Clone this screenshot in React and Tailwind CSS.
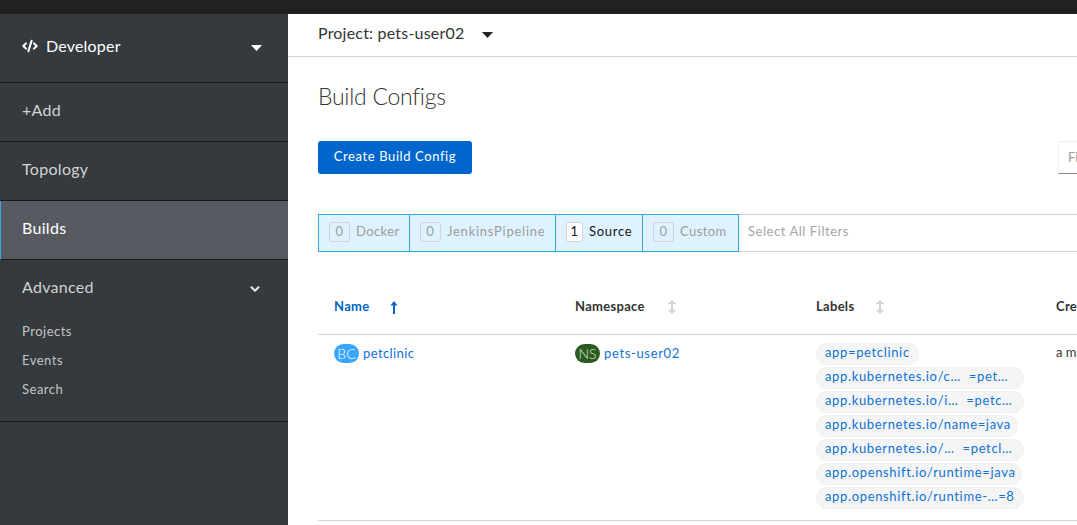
import { ChevronDown, CodeXml } from "lucide-react";

const font = "font-['Lato','Open_Sans',sans-serif]";

// 정렬 아이콘 (위아래 화살표)
function SortIcon({ active }) {
  if (active) {
    return (
      <svg width="8" height="13" viewBox="0 0 8 13" className="text-[#0066cc]">
        <path d="M4 0 L7.5 4.5 H5 V13 H3 V4.5 H0.5 Z" fill="currentColor" />
      </svg>
    );
  }
  return (
    <svg width="8" height="14" viewBox="0 0 8 14" className="text-[#d2d2d2]">
      <path d="M4 0 L8 4 H5 V10 H8 L4 14 L0 10 H3 V4 H0 Z" fill="currentColor" />
    </svg>
  );
}

function Caret({ color }) {
  return (
    <svg width="11" height="6" viewBox="0 0 11 6" className={color}>
      <path d="M0 0 H11 L5.5 6 Z" fill="currentColor" />
    </svg>
  );
}

function NavItem({ label, active }) {
  return (
    <div
      className={`h-[59px] flex items-center pb-[4px] border-b border-[#16191c] text-[16px] tracking-[0.3px] ${
        active
          ? "bg-[#575b61] text-white border-l border-l-[#39a5dc] pl-[21px]"
          : "pl-[22px] text-[#d2d2d2]"
      }`}
    >
      {label}
    </div>
  );
}

function Filter({ count, label, on, width, spacing }) {
  return (
    <div
      className={`h-full flex items-center pb-[2px] pl-[10px] gap-[6px] border border-[#39a5dc] -ml-px first:ml-0 bg-[#def3ff] text-[13px] ${spacing} ${width} ${
        on ? "text-[#151515]" : "text-[#9c9c9c]"
      }`}
    >
      <span
        className={`h-[20px] flex items-center justify-center rounded-[3px] border ${
          on
            ? "w-[17px] bg-white border-[#d2d2d2] text-[#151515]"
            : "w-[21px] border-[#d2d2d2]"
        }`}
      >
        {count}
      </span>
      {label}
    </div>
  );
}

function Label({ children, width }) {
  return (
    <div
      className={`h-[22px] rounded-full bg-[#f5f5f5] border border-[#f0f0f0] pl-[8px] pb-[2px] flex items-center text-[13px] text-[#0f72d6] whitespace-nowrap tracking-[0.65px] ${width}`}
    >
      {children}
    </div>
  );
}

function HeaderCell({ label, active, width, gap }) {
  return (
    <div className={`flex items-center shrink-0 pl-[16px] pb-[2px] ${width} ${gap}`}>
      <span className={`text-[13px] font-bold tracking-[0.3px] ${active ? "text-[#0066cc]" : "text-[#333]"}`}>
        {label}
      </span>
      <SortIcon active={active} />
    </div>
  );
}

export default function App() {
  return (
    <div className={`w-[1077px] h-[525px] overflow-hidden flex flex-col bg-white ${font}`}>
      <div className="h-[14px] shrink-0 bg-[#212121]" />
      <div className="flex flex-1 min-h-0">
        {/* 사이드바 */}
        <aside className="w-[288px] shrink-0 bg-[#343a3e]">
          <div className="h-[69px] flex items-center justify-between pl-[22px] pr-[26px] border-b border-[#16191c]">
            <div className="flex items-center gap-[8px] pb-[4px] text-white text-[16px] tracking-[0.2px]">
              <CodeXml size={16} strokeWidth={3} />
              Developer
            </div>
            <Caret color="text-white" />
          </div>
          <NavItem label="+Add" />
          <NavItem label="Topology" />
          <NavItem label="Builds" active />
          <div className="h-[162px] border-b border-[#16191c]">
            <div className="h-[58px] flex items-center justify-between pl-[22px] pr-[26px] text-[16px] tracking-[0.3px] text-[#d2d2d2]">
              <span className="pb-[4px]">Advanced</span>
              <ChevronDown size={14} strokeWidth={3.5} className="text-[#e6e6e6]" />
            </div>
            <div className="mt-[3px] flex flex-col gap-[9px] pl-[22px] text-[13px] tracking-[0.5px] leading-[20px] text-[#c4c4c4]">
              <span>Projects</span>
              <span>Events</span>
              <span>Search</span>
            </div>
          </div>
        </aside>

        {/* 본문 */}
        <main className="flex-1 min-w-0 overflow-hidden">
          <div className="h-[43px] flex items-center pl-[30px] gap-[18px] border-b border-[#d2d2d2] text-[16px] tracking-[0.2px] text-[#333]">
            <span className="pb-[4px]">Project: pets-user02</span>
            <Caret color="text-[#222]" />
          </div>
          <h1 className="mt-[23px] pl-[30px] text-[23px] leading-[32px] font-light text-[#333] tracking-[-0.27px]">
            Build Configs
          </h1>
          <div className="mt-[29px] pl-[30px] flex justify-between">
            <button className="w-[154px] h-[33px] pb-[2px] rounded-[3px] bg-[#0066cc] text-white text-[13px] tracking-[0.6px]">
              Create Build Config
            </button>
            <div className="w-[19px] h-[33px] border border-[#ededed] border-b-[#8a8d90] border-r-0 pl-[9px] flex items-center text-[13px] text-[#9c9c9c] overflow-hidden">
              Fi
            </div>
          </div>

          {/* 필터 */}
          <div className="mt-[40px] ml-[30px] h-[38px] flex items-center border-y border-[#d2d2d2] box-border">
            <div className="flex h-[38px]">
              <Filter count="0" label="Docker" width="w-[92px]" spacing="tracking-[0.4px]" />
              <Filter count="0" label="JenkinsPipeline" width="w-[147px]" spacing="tracking-[0.75px]" />
              <Filter count="1" label="Source" on width="w-[88px]" spacing="tracking-[0.7px]" />
              <Filter count="0" label="Custom" width="w-[97px]" spacing="tracking-[0.4px]" />
            </div>
            <span className="ml-[9px] pb-[2px] text-[13px] tracking-[0.55px] text-[#a5a5a5]">Select All Filters</span>
          </div>

          {/* 테이블 */}
          <div className="ml-[30px] mt-[30px] w-[900px]">
            <div className="h-[53px] flex items-center border-b border-[#d2d2d2]">
              <HeaderCell label="Name" active width="w-[241px]" gap="gap-[21px]" />
              <HeaderCell label="Namespace" width="w-[241px]" gap="gap-[23px]" />
              <HeaderCell label="Labels" width="w-[240px]" gap="gap-[22px]" />
              <span className="pl-[16px] pb-[2px] text-[13px] font-bold tracking-[0.3px] text-[#333]">Created</span>
            </div>
            <div className="h-[186px] flex border-b border-[#d2d2d2] pt-[8px] text-[13px]">
              <div className="w-[241px] shrink-0 pl-[16px] pt-[1px] flex items-start gap-[4px] text-[#0f72d6] tracking-[0.4px]">
                <span className="w-[25px] h-[19px] rounded-full bg-[#39a5ff] text-white text-[14px] font-light flex items-center justify-center tracking-normal">BC</span>
                <span>petclinic</span>
              </div>
              <div className="w-[241px] shrink-0 pl-[16px] pt-[1px] flex items-start gap-[4px] text-[#0f72d6] tracking-[0.65px]">
                <span className="w-[25px] h-[19px] rounded-full bg-[#2b5a22] text-[#d8e6d4] text-[14px] font-light flex items-center justify-center tracking-normal">NS</span>
                <span>pets-user02</span>
              </div>
              <div className="w-[240px] shrink-0 pl-[16px] flex flex-col gap-[2px]">
                <Label width="w-[103px]">app=petclinic</Label>
                <Label width="w-[208px]">app.kubernetes.io/c…&nbsp;&nbsp;=pet…</Label>
                <Label width="w-[208px]">app.kubernetes.io/i…&nbsp;&nbsp;=petc…</Label>
                <Label width="w-[202px]">app.kubernetes.io/name=java</Label>
                <Label width="w-[208px]">app.kubernetes.io/…&nbsp;&nbsp;=petcl…</Label>
                <Label width="w-[206px]">app.openshift.io/runtime=java</Label>
                <Label width="w-[208px]">app.openshift.io/runtime-…=8</Label>
              </div>
              <div className="pl-[16px] text-[#333]">a minute ago</div>
            </div>
          </div>
        </main>
      </div>
    </div>
  );
}
